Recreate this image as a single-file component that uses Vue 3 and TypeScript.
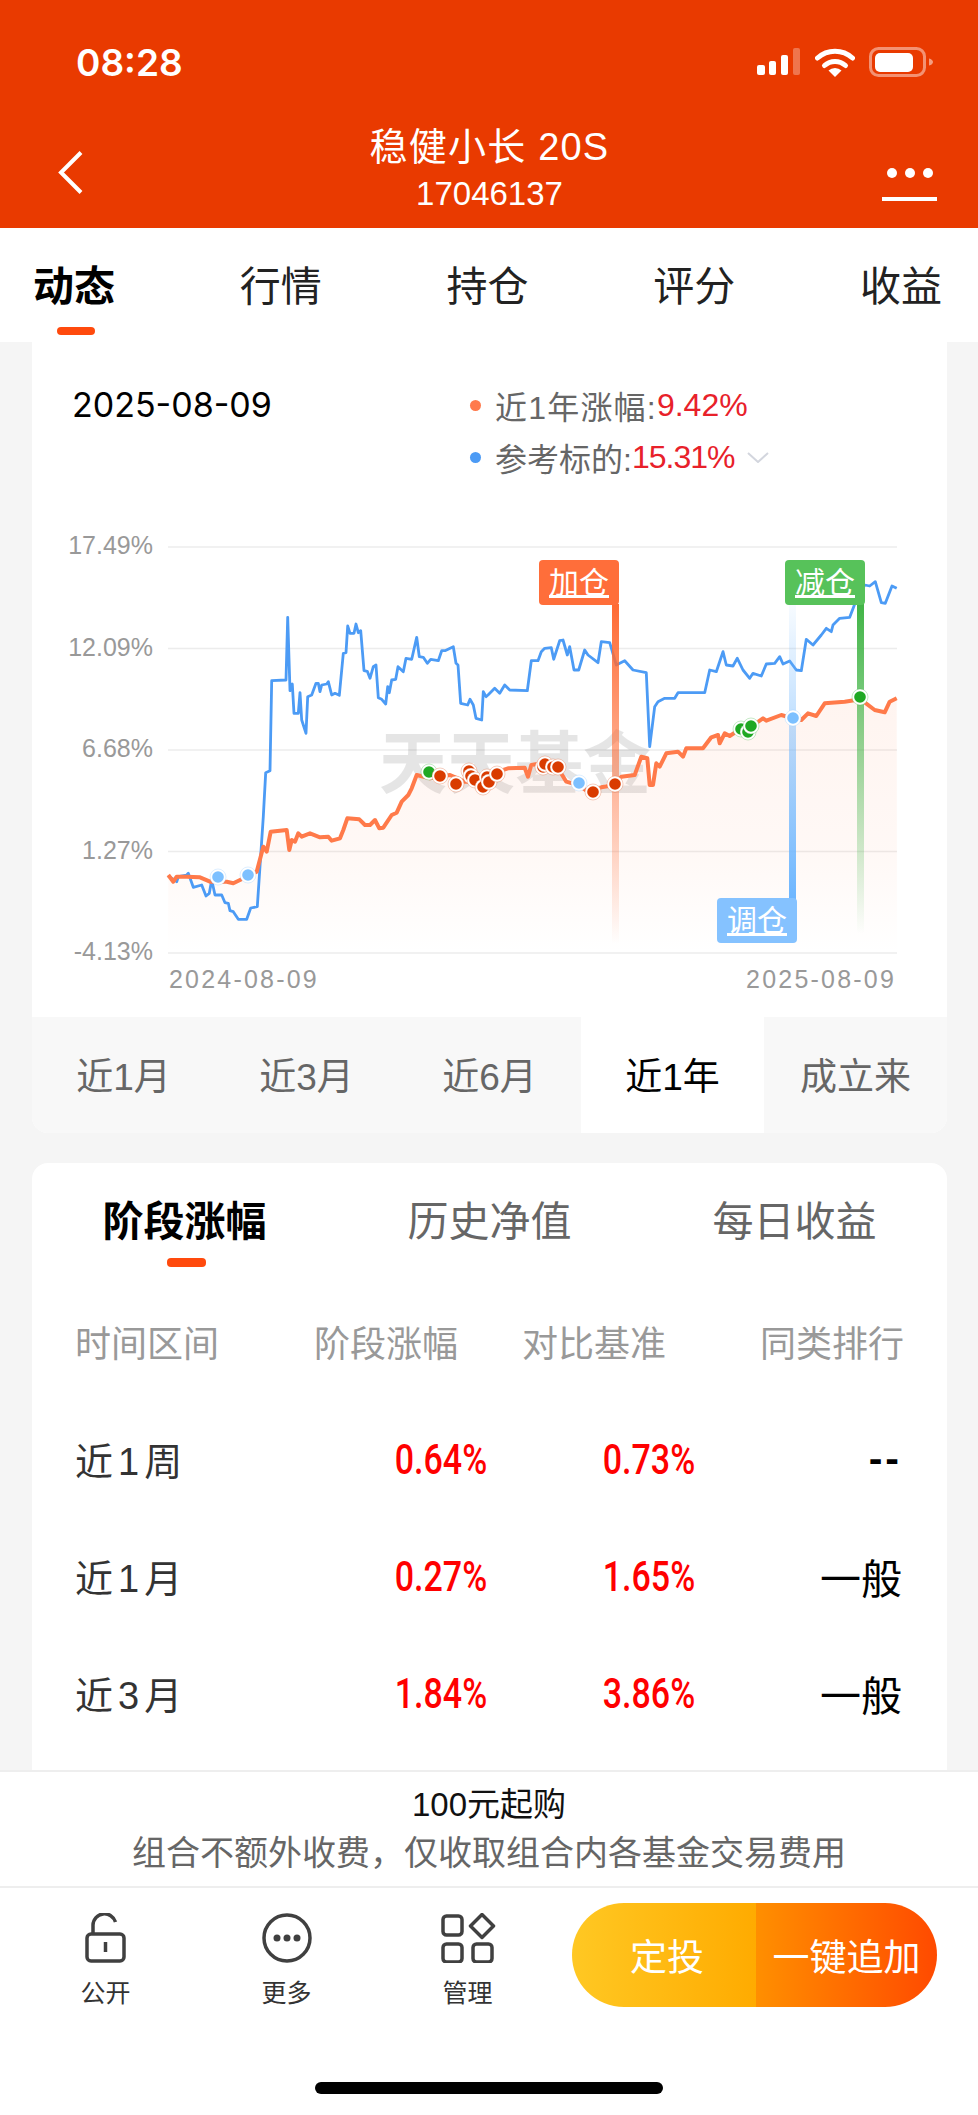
<template>
  <div class="page">
    <header class="header">
      <div class="status">
        <span class="time">08:28</span>
        <div class="status-icons">
          <svg width="44" height="28" viewBox="0 0 44 28">
            <rect x="0" y="17" width="8" height="10" rx="2" fill="#fff" />
            <rect x="12" y="13" width="7" height="14" rx="2" fill="#fff" />
            <rect x="24" y="7" width="7" height="20" rx="2" fill="#fff" />
            <rect x="36" y="0" width="7" height="27" rx="2" fill="#fff" opacity=".3" />
          </svg>
          <svg width="40" height="30" viewBox="0 0 40 30">
            <path d="M2.5 11A26 26 0 0 1 37.5 11" fill="none" stroke="#fff" stroke-width="5" stroke-linecap="round" />
            <path d="M9.5 18.5A15.5 15.5 0 0 1 30.5 18.5" fill="none" stroke="#fff" stroke-width="5" stroke-linecap="round" />
            <path d="M13.5 23.5A9.5 9.5 0 0 1 26.5 23.5L20 30Z" fill="#fff" />
          </svg>
          <svg width="65" height="30" viewBox="0 0 65 30">
            <rect x="1.5" y="1.5" width="54" height="27" rx="8" fill="none" stroke="#fff" stroke-opacity=".45" stroke-width="3" />
            <rect x="6" y="6" width="38" height="19" rx="5" fill="#fff" />
            <path d="M60 11.5c2.5.5 4 2 4 3.5s-1.5 3-4 3.5Z" fill="#fff" opacity=".5" />
          </svg>
        </div>
      </div>
      <div class="nav">
        <svg class="back" width="26" height="45" viewBox="0 0 26 45">
          <path d="M23 2.5 3 22.5l20 20" fill="none" stroke="#fff" stroke-width="4" />
        </svg>
        <div class="title">
          <div class="name">稳健小长 20S</div>
          <div class="code">17046137</div>
        </div>
        <div class="more">
          <div class="dots"><i /><i /><i /></div>
          <div class="more-line" />
        </div>
      </div>
    </header>

    <nav class="tabs">
      <div v-for="(t, i) in mainTabs" :key="t" class="tab" :class="{ on: i === 0 }">
        {{ t }}
        <span v-if="i === 0" class="tab-bar" />
      </div>
    </nav>

    <main class="content">
      <section class="card chart-card">
        <div class="chart-head">
          <div class="date">2025-08-09</div>
          <div class="legend">
            <div class="legend-row">
              <i class="dot orange" /><span class="spaced">近1年涨幅:</span><span class="red">9.42%</span>
            </div>
            <div class="legend-row">
              <i class="dot blue" />参考标的:<span class="red tight">15.31%</span>
              <svg class="chev" width="22" height="11" viewBox="0 0 22 11">
                <path d="M1 1l10 9 10-9" fill="none" stroke="#d3d6de" stroke-width="2" />
              </svg>
            </div>
          </div>
        </div>

        <svg class="chart" width="914" height="517" viewBox="32 500 914 517">
          <defs>
            <linearGradient id="area" x1="0" y1="0" x2="0" y2="1">
              <stop offset="0" stop-color="#ff7a45" stop-opacity=".08" />
              <stop offset=".6" stop-color="#ff7a45" stop-opacity=".05" />
              <stop offset="1" stop-color="#ff7a45" stop-opacity="0" />
            </linearGradient>
            <linearGradient id="barOrange" x1="0" y1="0" x2="0" y2="1">
              <stop offset="0" stop-color="#ff6a33" />
              <stop offset="1" stop-color="#ff6a33" stop-opacity="0" />
            </linearGradient>
            <linearGradient id="barGreen" x1="0" y1="0" x2="0" y2="1">
              <stop offset="0" stop-color="#41b446" />
              <stop offset="1" stop-color="#41b446" stop-opacity="0" />
            </linearGradient>
            <linearGradient id="barBlue" x1="0" y1="1" x2="0" y2="0">
              <stop offset="0" stop-color="#6db6ff" />
              <stop offset="1" stop-color="#6db6ff" stop-opacity=".05" />
            </linearGradient>
          </defs>

          <line v-for="g in grid" :key="g.y" x1="168" x2="897" :y1="g.y" :y2="g.y" stroke="#ececec" stroke-width="1.5" />
          <text v-for="g in grid" :key="g.label" class="axis" x="153" :y="g.y + 7" text-anchor="end">{{ g.label }}</text>
          <text class="axis date-label" x="169" y="988">2024-08-09</text>
          <text class="axis date-label" x="896" y="988" text-anchor="end">2025-08-09</text>

          <text class="mark" x="515" y="788" text-anchor="middle">天天基金</text>

          <path :d="areaPath" fill="url(#area)" />
          <path :d="bluePath" fill="none" stroke="#4c9bf5" stroke-width="2.8" stroke-linejoin="round" />
          <path :d="orangePath" fill="none" stroke="#ff7a4a" stroke-width="4" stroke-linejoin="round" />

          <rect x="612" y="604" width="7" height="340" fill="url(#barOrange)" />
          <rect x="857" y="604" width="7" height="330" fill="url(#barGreen)" />
          <rect x="789" y="604" width="7" height="296" fill="url(#barBlue)" />

          <g v-for="f in flags" :key="f.label">
            <rect :x="f.x" :y="f.y" width="80" height="45" rx="4" :fill="f.color" />
            <text class="flag" :x="f.x + 40" :y="f.y + 33" text-anchor="middle">{{ f.label }}</text>
          </g>

          <g v-for="(d, i) in dots" :key="i">
            <circle :cx="d[0]" :cy="d[1]" r="8" fill="#fff" :stroke="d[2]" stroke-opacity=".25" />
            <circle :cx="d[0]" :cy="d[1]" r="5.8" :fill="d[2]" />
          </g>
        </svg>

        <div class="ranges">
          <div v-for="(r, i) in ranges" :key="r" class="range" :class="{ on: i === 3 }">{{ r }}</div>
        </div>
      </section>

      <section class="card stage-card">
        <div class="stage-tabs">
          <div v-for="(t, i) in stageTabs" :key="t" class="stage-tab" :class="{ on: i === 0 }">
            {{ t }}
            <span v-if="i === 0" class="stage-bar" />
          </div>
        </div>
        <div class="thead">
          <span>时间区间</span><span>阶段涨幅</span><span>对比基准</span><span>同类排行</span>
        </div>
        <div v-for="r in rows" :key="r.name" class="trow">
          <span class="r-name">{{ r.name }}</span>
          <span class="pct"><b>{{ r.stage }}</b></span>
          <span class="pct"><b>{{ r.base }}</b></span>
          <span class="rank" :class="{ dash: r.rank === '--' }">{{ r.rank }}</span>
        </div>
      </section>
    </main>

    <footer class="bottom">
      <div class="notice">
        <div class="n1">100元起购</div>
        <div class="n2">组合不额外收费，仅收取组合内各基金交易费用</div>
      </div>
      <div class="toolbar">
        <div class="tool">
          <svg width="50" height="50" viewBox="0 0 50 50">
            <path d="M12 21v-9a11.5 11.5 0 0 1 22.5-3" fill="none" stroke="#404040" stroke-width="3.5" />
            <rect x="6" y="21" width="37" height="27" rx="4" fill="none" stroke="#404040" stroke-width="3.5" />
            <path d="M24.5 29v10" stroke="#404040" stroke-width="3.5" />
          </svg>
          <span>公开</span>
        </div>
        <div class="tool">
          <svg width="50" height="50" viewBox="0 0 50 50">
            <circle cx="25" cy="25" r="23" fill="none" stroke="#404040" stroke-width="3.5" />
            <circle cx="15" cy="25" r="3.5" fill="#404040" />
            <circle cx="25" cy="25" r="3.5" fill="#404040" />
            <circle cx="35" cy="25" r="3.5" fill="#404040" />
          </svg>
          <span>更多</span>
        </div>
        <div class="tool">
          <svg width="56" height="50" viewBox="0 0 56 50">
            <rect x="3" y="3" width="19" height="19" rx="3.5" fill="none" stroke="#404040" stroke-width="3.5" />
            <rect x="3" y="31" width="19" height="18" rx="3.5" fill="none" stroke="#404040" stroke-width="3.5" />
            <rect x="33" y="31" width="19" height="18" rx="3.5" fill="none" stroke="#404040" stroke-width="3.5" />
            <path d="M42 1.5 53.5 13 42 24.5 30.5 13Z" fill="none" stroke="#404040" stroke-width="3.5" stroke-linejoin="round" />
          </svg>
          <span>管理</span>
        </div>
        <div class="buy">
          <div class="buy-left">定投</div>
          <div class="buy-right">一键追加</div>
        </div>
      </div>
      <div class="home" />
    </footer>
  </div>
</template>

<script setup lang="ts">
type Pt = [number, number]

const mainTabs = ['动态', '行情', '持仓', '评分', '收益']
const ranges = ['近1月', '近3月', '近6月', '近1年', '成立来']
const stageTabs = ['阶段涨幅', '历史净值', '每日收益']

const rows = [
  { name: '近1周', stage: '0.64%', base: '0.73%', rank: '--' },
  { name: '近1月', stage: '0.27%', base: '1.65%', rank: '一般' },
  { name: '近3月', stage: '1.84%', base: '3.86%', rank: '一般' },
]

const grid = [
  { y: 547, label: '17.49%' },
  { y: 648.5, label: '12.09%' },
  { y: 750, label: '6.68%' },
  { y: 851.5, label: '1.27%' },
  { y: 953, label: '-4.13%' },
]

const flags = [
  { x: 539, y: 560, label: '加仓', color: '#ff6e3a' },
  { x: 785, y: 560, label: '减仓', color: '#57c25a' },
  { x: 717, y: 898, label: '调仓', color: '#85c2ff' },
]

const RED = '#d93b00'
const GREEN = '#1fa823'
const BLUE = '#7cc0ff'

const dots: [number, number, string][] = [
  [218, 877, BLUE], [248, 875, BLUE],
  [469, 771, RED], [471, 776, RED], [475, 780, RED], [483, 787, RED], [487, 777, RED], [489, 782, RED],
  [429, 772, GREEN], [440, 776, RED], [456, 784, RED], [497, 774, RED],
  [543, 767, RED], [545, 764, RED], [553, 767, RED], [558, 767, RED],
  [579, 783, BLUE], [593, 792, RED], [615, 784, RED],
  [741, 729, GREEN], [748, 732, GREEN], [751, 726, GREEN], [793, 718, BLUE], [860, 697, GREEN],
]

// traced from the two 3x crops: left half starts at x=0, right half at x=488
const blueLeft: Pt[] = [
  [505,1128],[530,1145],[535,1130],[560,1125],[565,1120],[580,1162],[605,1155],[618,1188],[628,1180],[635,1140],
  [645,1185],[665,1185],[675,1208],[685,1210],[690,1232],[700,1235],[715,1258],[740,1258],[752,1224],[772,1220],
  [778,1130],[790,950],[797,818],[810,812],[815,542],[858,540],[863,352],[870,572],[877,552],[882,640],[895,640],
  [900,578],[905,660],[918,700],[923,590],[935,585],[948,550],[955,550],[960,575],[965,555],[980,552],[985,545],
  [995,585],[1005,580],[1018,586],[1030,460],[1038,458],[1043,378],[1050,400],[1062,400],[1068,372],[1075,398],
  [1082,392],[1092,512],[1102,514],[1110,535],[1120,500],[1128,495],[1135,593],[1145,598],[1157,612],[1163,560],
  [1168,578],[1175,540],[1187,538],[1194,500],[1210,515],[1218,475],[1235,478],[1250,412],[1258,470],[1270,472],
  [1282,490],[1292,478],[1315,482],[1325,452],[1335,452],[1360,440],[1368,490],[1374,495],[1382,610],[1403,615],
  [1410,598],[1420,615],[1428,655],[1445,660],[1450,575],[1458,590],
]
const blueRight: Pt[] = [
  [0,585],[20,565],[35,580],[50,555],[65,570],[118,572],[130,482],[150,482],[160,455],[170,445],[190,443],[197,478],
  [215,422],[225,420],[238,465],[245,440],[258,510],[272,510],[290,450],[300,465],[330,488],[340,425],[365,428],
  [385,495],[410,482],[435,510],[475,518],[485,740],[500,620],[510,605],[530,595],[560,595],[570,578],[590,578],
  [650,578],[665,510],[685,515],[705,455],[715,495],[735,498],[748,475],[765,510],[785,535],[795,520],[820,528],
  [835,492],[860,490],[875,470],[885,492],[905,483],[925,510],[940,512],[955,418],[975,435],[1000,405],[1015,385],
  [1030,395],[1035,375],[1055,355],[1085,352],[1105,300],[1130,255],[1145,258],[1162,245],[1180,308],[1192,310],
  [1212,258],[1226,265],
]
const orangeLeft: Pt[] = [
  [505,1125],[520,1145],[530,1130],[560,1130],[600,1132],[630,1145],[680,1145],[700,1150],[720,1140],[745,1128],
  [770,1115],[790,1040],[800,1055],[812,995],[860,990],[868,1050],[875,1020],[885,1025],[895,1000],[905,1010],
  [930,1000],[960,1012],[985,1010],[995,1022],[1020,1015],[1030,990],[1042,955],[1078,958],[1095,975],[1110,975],
  [1125,960],[1138,985],[1150,983],[1175,945],[1190,938],[1205,905],[1225,885],[1235,865],[1250,825],[1290,835],
  [1350,825],[1395,845],[1425,845],
]
const orangeRight: Pt[] = [
  [0,835],[30,815],[60,805],[110,803],[120,830],[130,795],[160,790],[210,805],[235,845],[270,855],[300,875],[340,862],
  [380,855],[400,830],[440,825],[460,770],[478,775],[485,855],[495,855],[505,790],[515,800],[535,760],[570,755],
  [585,770],[595,745],[645,745],[670,712],[690,705],[695,730],[710,700],[725,708],[760,685],[790,680],[825,655],
  [835,662],[880,645],[915,655],[940,660],[960,640],[985,648],[1010,610],[1070,605],[1118,598],[1160,630],[1190,637],
  [1205,605],[1226,595],
]

function toPage(left: Pt[], right: Pt[]): string {
  const a = left.map(([x, y]) => `${(x / 3).toFixed(1)} ${(500 + y / 3).toFixed(1)}`)
  const b = right.map(([x, y]) => `${(488 + x / 3).toFixed(1)} ${(500 + y / 3).toFixed(1)}`)
  return a.concat(b).join('L')
}

const bluePath = 'M' + toPage(blueLeft, blueRight)
const orangePath = 'M' + toPage(orangeLeft, orangeRight)
const areaPath = orangePath + 'L897 953L168 953Z'
</script>

<style>
html,
body {
  margin: 0;
  background: #fff;
}
</style>

<style scoped>
.page {
  width: 978px;
  height: 2115px;
  display: flex;
  flex-direction: column;
  overflow: hidden;
  font-family: "Liberation Sans", "Noto Sans CJK SC", sans-serif;
  background: #f5f5f5;
}
.header {
  height: 228px;
  background: #e93a00;
  color: #fff;
}
.status {
  height: 124px;
  display: flex;
  align-items: center;
  justify-content: space-between;
  padding: 0 44px 0 76px;
}
.time {
  font-family: Inter, sans-serif;
  font-size: 37px;
  font-weight: 600;
}
.status-icons {
  display: flex;
  align-items: center;
  gap: 14px;
}
.nav {
  display: flex;
  justify-content: space-between;
  align-items: center;
  height: 92px;
  padding: 0 41px 0 58px;
}
.back {
  margin-top: 4px;
}
.title {
  text-align: center;
  margin-left: 13px;
}
.name {
  font-size: 38px;
  line-height: 46px;
  letter-spacing: 1.2px;
}
.code {
  font-size: 33px;
  line-height: 46px;
  margin-top: 1px;
}
.more {
  width: 55px;
  margin-top: 29px;
}
.dots {
  display: flex;
  justify-content: center;
  gap: 8px;
}
.dots i {
  width: 10px;
  height: 10px;
  border-radius: 50%;
  background: #fff;
}
.more-line {
  height: 4px;
  margin-top: 19px;
  background: #fff;
}
.tabs {
  height: 114px;
  flex: none;
  background: #fff;
  display: flex;
  justify-content: space-between;
  padding: 0 36px 0 33px;
}
.tab {
  position: relative;
  width: 82px;
  padding-top: 34px;
  font-size: 41px;
  line-height: 50px;
  color: #222;
  white-space: nowrap;
}
.tab.on {
  font-weight: 700;
  color: #000;
}
.tab-bar {
  position: absolute;
  left: 24px;
  top: 99px;
  width: 38px;
  height: 8px;
  border-radius: 4px;
  background: #ff4a0d;
}
.content {
  flex: 1;
  min-height: 0;
  overflow: hidden;
  padding: 0 31px 0 32px;
  display: flex;
  flex-direction: column;
  gap: 30px;
}
.card {
  background: #fff;
  flex: none;
}
.chart-card {
  border-radius: 0 0 16px 16px;
  overflow: hidden;
}
.chart-head {
  display: flex;
  height: 158px;
  box-sizing: border-box;
  padding: 38px 0 0 40px;
}
.date {
  width: 398px;
  font-family: Inter, sans-serif;
  font-size: 34px;
  line-height: 50px;
  color: #000;
}
.legend {
  margin-top: -1px;
}
.legend-row {
  display: flex;
  align-items: center;
  height: 52px;
  font-size: 32px;
  color: #666;
  white-space: nowrap;
}
.spaced {
  letter-spacing: 1.2px;
}
.tight {
  letter-spacing: -1px;
}
.dot {
  width: 11px;
  height: 11px;
  border-radius: 50%;
  margin-right: 14px;
}
.dot.orange {
  background: #ff7a4d;
}
.dot.blue {
  background: #4c9bf5;
}
.red {
  color: #e8212a;
}
.chev {
  margin-left: 13px;
}
.chart {
  display: block;
}
.axis {
  font-family: "Liberation Sans", sans-serif;
  font-size: 25px;
  fill: #999;
}
.date-label {
  letter-spacing: 2.2px;
}
.mark {
  font-family: "Noto Sans CJK SC", sans-serif;
  font-size: 68px;
  font-weight: 700;
  fill: #000;
  fill-opacity: 0.1;
}
.flag {
  font-size: 30px;
  fill: #fff;
  text-decoration: underline;
}
.ranges {
  display: grid;
  grid-template-columns: repeat(5, 1fr);
  height: 116px;
  background: #f8f8f8;
}
.range {
  display: flex;
  align-items: center;
  justify-content: center;
  padding-bottom: 3px;
  font-size: 37px;
  color: #666;
}
.range.on {
  background: #fff;
  color: #000;
}
.stage-card {
  flex: 1;
  border-radius: 16px 16px 0 0;
  padding: 31px 0 0;
}
.stage-tabs {
  display: grid;
  grid-template-columns: repeat(3, 1fr);
  height: 73px;
}
.stage-tab {
  position: relative;
  text-align: center;
  font-size: 41px;
  line-height: 56px;
  color: #666;
}
.stage-tab.on {
  font-weight: 700;
  color: #000;
}
.stage-bar {
  position: absolute;
  left: 135px;
  top: 64px;
  width: 39px;
  height: 9px;
  border-radius: 4px;
  background: #ff4a0d;
}
.thead {
  display: grid;
  grid-template-columns: 143px 240px 208px 238px;
  margin: 53px 0 31px 43px;
  font-size: 36px;
  line-height: 50px;
  color: #999;
  text-align: right;
  white-space: nowrap;
}
.thead span:first-child {
  text-align: left;
}
.trow {
  display: grid;
  grid-template-columns: 412px 208px 207px;
  align-items: center;
  height: 117px;
  margin-left: 43px;
  text-align: right;
}
.r-name {
  text-align: left;
  grid-column: 1;
  grid-row: 1;
  margin-top: -3px;
  font-size: 38px;
  letter-spacing: 5px;
  color: #333;
}
.pct {
  font-family: Roboto, sans-serif;
  font-size: 42px;
  color: #f00;
}
.pct:nth-child(2) {
  grid-column: 1;
  grid-row: 1;
}
.pct b {
  display: inline-block;
  font-weight: 500;
  transform: scaleX(0.81);
  transform-origin: right center;
}
.rank {
  margin-top: -2px;
  font-size: 41px;
  color: #000;
}
.rank.dash {
  font-weight: 700;
  letter-spacing: 3px;
}
.bottom {
  height: 345px;
  flex: none;
  background: #fff;
  border-top: 2px solid #eee;
  box-sizing: border-box;
}
.notice {
  height: 116px;
  box-sizing: border-box;
  padding-top: 10px;
  text-align: center;
  border-bottom: 2px solid #eee;
}
.n1 {
  font-size: 33px;
  line-height: 46px;
  color: #111;
}
.n2 {
  font-size: 34px;
  line-height: 50px;
  color: #666;
}
.toolbar {
  display: grid;
  grid-template-columns: 181px 181px 181px 379px;
  padding-left: 15px;
  height: 119px;
}
.tool {
  display: flex;
  flex-direction: column;
  align-items: center;
  padding-top: 25px;
  font-size: 25px;
  color: #333;
}
.tool span {
  margin-top: 12px;
  line-height: 36px;
}
.buy {
  display: grid;
  grid-template-columns: 184px 181px;
  height: 104px;
  margin: 15px 0 0 14px;
  border-radius: 52px;
  overflow: hidden;
  color: #fff;
  font-size: 37px;
}
.buy-left,
.buy-right {
  display: flex;
  align-items: center;
  justify-content: center;
}
.buy-left {
  background: linear-gradient(90deg, #ffc823, #ffab00);
  padding-left: 6px;
}
.buy-right {
  background: linear-gradient(90deg, #ff8f00, #ff4a00);
  white-space: nowrap;
}
.home {
  width: 348px;
  height: 12px;
  margin: 75px auto 0;
  border-radius: 6px;
  background: #000;
}
</style>
